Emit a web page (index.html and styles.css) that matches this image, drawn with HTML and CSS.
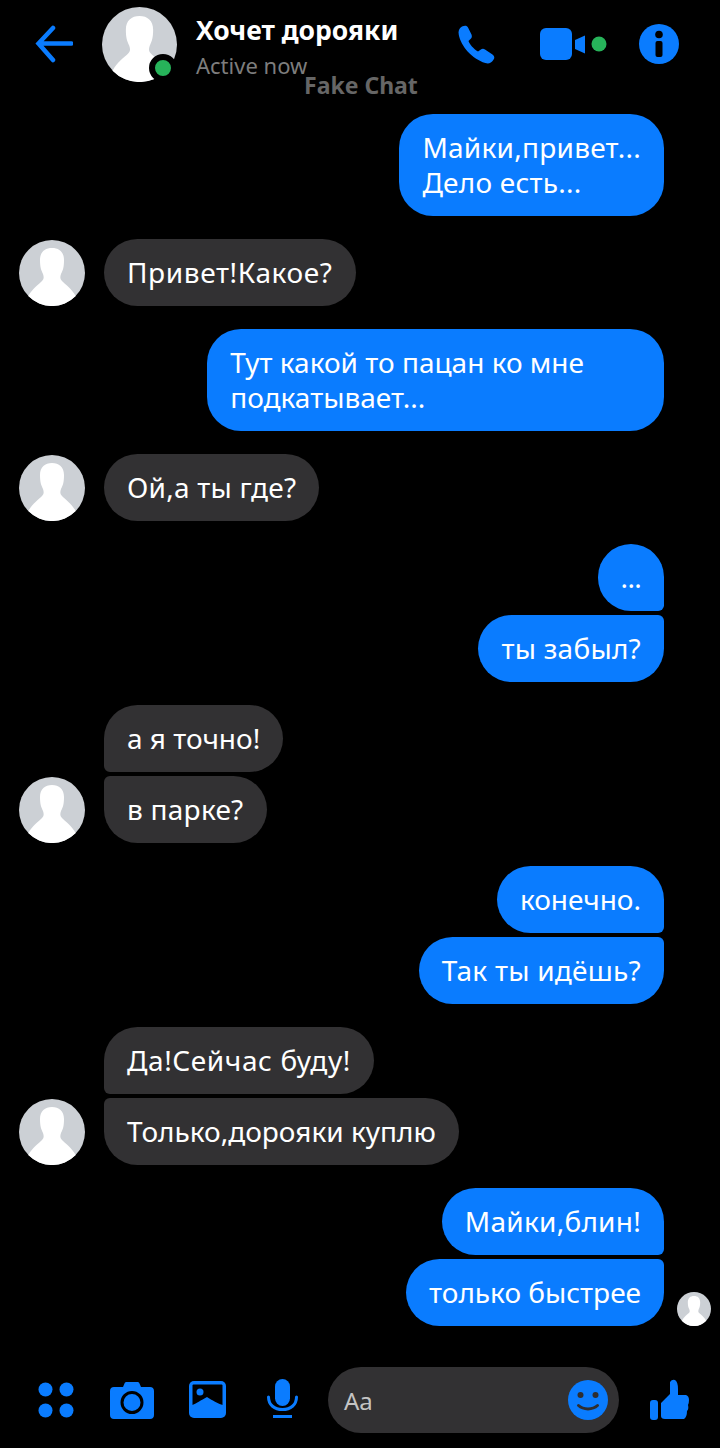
FILE: index.html
```html
<!DOCTYPE html>
<html lang="ru">
<head>
    <meta charset="UTF-8">
    <meta name="viewport" content="width=device-width, initial-scale=1.0">
    <title>Fake Chat</title>
    <link rel="stylesheet" href="styles.css">
</head>
<body>

<svg class="defs" width="0" height="0">
    <symbol id="face" viewBox="0 0 66 66">
        <circle cx="33" cy="33" r="33" fill="#ccd0d5"/>
        <path d="M21 20C21 12 26 8 33 8S45 12 45 20C45 27 44 30 42 34C41 37 41 39 43 41C46 44 53 49 56.700 56A33 33 0 0 1 9.300 56C13 49 20 44 23 41C25 39 25 37 24 34C22 30 21 27 21 20Z" fill="#fff"/>
    </symbol>
</svg>

<header class="top">
    <svg class="back" width="40" height="38" viewBox="0 0 40 38">
        <path d="M38.500 18.500H6M20 3 5.500 18.500 20 35" fill="none" stroke="#0a7cff" stroke-width="4.500" stroke-linecap="round" stroke-linejoin="miter"/>
    </svg>
    <div class="top-avatar">
        <svg class="avatar-big"><use href="#face"/></svg>
        <span class="online"></span>
    </div>
    <div class="title">
        <div class="name">Хочет дорояки</div>
        <div class="status">Active now</div>
    </div>
    <svg class="phone" width="40" height="40" viewBox="0 0 40 40">
        <path d="M4 1.500c3-1.500 5-1 6 1l3.500 7c.8 2 .2 3.500-1 4.500l-2 2c1 3 5 8 9.500 10.500l2.500-1.800c1.500-1 3-1.200 4.500-.2l7.500 5c2 1.500 2.500 3.500.8 5.500-2 3-4.500 4-8 3C14 34 3 21 .8 10 0 6 1 3.500 4 1.500z" fill="#0a7cff"/>
    </svg>
    <svg class="video" width="69" height="32" viewBox="0 0 69 32">
        <rect x="0" y="0" width="32" height="32" rx="6" fill="#0a7cff"/>
        <path d="M35 12 45 7.500v18L35 21z" fill="#0a7cff"/>
        <circle cx="59" cy="16" r="7.500" fill="#27b35a"/>
    </svg>
    <svg class="info" width="40" height="40" viewBox="0 0 40 40">
        <circle cx="20" cy="20" r="20" fill="#0a7cff"/>
        <circle cx="20" cy="10.500" r="3.800" fill="#000"/>
        <rect x="16.500" y="17" width="7" height="16" rx="2" fill="#000"/>
    </svg>
</header>
<div class="watermark">Fake Chat</div>

<main class="chat">
    <div class="group sent">
        <div class="bubble slight">Майки,привет...<br>Дело есть...</div>
    </div>
    <div class="group recv">
        <svg class="avatar"><use href="#face"/></svg>
        <div class="stack">
            <div class="bubble loose">Привет!Какое?</div>
        </div>
    </div>
    <div class="group sent">
        <div class="bubble wide">Тут какой то пацан ко мне<br>подкатывает...</div>
    </div>
    <div class="group recv">
        <svg class="avatar"><use href="#face"/></svg>
        <div class="stack">
            <div class="bubble slight">Ой,а ты где?</div>
        </div>
    </div>
    <div class="group sent">
        <div class="bubble first dots">...</div>
        <div class="bubble last slight">ты забыл?</div>
    </div>
    <div class="group recv">
        <svg class="avatar"><use href="#face"/></svg>
        <div class="stack">
            <div class="bubble first">а я точно!</div>
            <div class="bubble last slight">в парке?</div>
        </div>
    </div>
    <div class="group sent">
        <div class="bubble first">конечно.</div>
        <div class="bubble last slight">Так ты идёшь?</div>
    </div>
    <div class="group recv">
        <svg class="avatar"><use href="#face"/></svg>
        <div class="stack">
            <div class="bubble first loose">Да!Сейчас буду!</div>
            <div class="bubble last">Только,дорояки куплю</div>
        </div>
    </div>
    <div class="group sent">
        <div class="bubble first slight">Майки,блин!</div>
        <div class="seen-row">
            <div class="bubble last">только быстрее</div>
            <svg class="seen"><use href="#face"/></svg>
        </div>
    </div>
</main>

<footer class="bottom">
    <svg class="apps" width="37" height="37" viewBox="0 0 37 37">
        <circle cx="7.500" cy="7.500" r="7" fill="#0a7cff"/>
        <circle cx="28.500" cy="7.500" r="7" fill="#0a7cff"/>
        <circle cx="7.500" cy="28.500" r="7" fill="#0a7cff"/>
        <circle cx="28.500" cy="28.500" r="7" fill="#0a7cff"/>
    </svg>
    <svg class="camera" width="44" height="37" viewBox="0 0 44 37">
        <path d="M13 5l1.500-3.500c.4-1 1-1.500 2-1.500h11c1 0 1.600.5 2 1.500L31 5h9c2.500 0 4 1.500 4 4v24c0 2.500-1.500 4-4 4H4c-2.500 0-4-1.500-4-4V9c0-2.500 1.500-4 4-4z" fill="#0a7cff"/>
        <circle cx="22" cy="20.500" r="10" fill="#0a7cff" stroke="#000" stroke-width="3"/>
    </svg>
    <svg class="image" width="37" height="37" viewBox="0 0 37 37">
        <rect width="37" height="37" rx="5" fill="#0a7cff"/>
        <rect x="3.500" y="3.500" width="30" height="30" rx="1" fill="#000"/>
        <circle cx="11" cy="11" r="3.500" fill="#0a7cff"/>
        <path d="M3 24c4-1 9-5 15-8 5 3 11 7 16 8v10H3z" fill="#0a7cff"/>
    </svg>
    <svg class="mic" width="31" height="39" viewBox="0 0 31 39">
        <rect x="8" y="0" width="15" height="27" rx="7.500" fill="#0a7cff"/>
        <path d="M1.500 18c0 8 6 12.500 14 12.500S29.500 26 29.500 18" fill="none" stroke="#0a7cff" stroke-width="3" stroke-linecap="round"/>
        <rect x="6" y="36" width="19" height="3" fill="#0a7cff"/>
    </svg>
    <div class="input">
        <span class="placeholder">Aa</span>
        <svg class="smile" width="40" height="40" viewBox="0 0 40 40">
            <circle cx="20" cy="20" r="20" fill="#0a7cff"/>
            <circle cx="12.500" cy="15" r="3" fill="#2f2e30"/>
            <circle cx="27.500" cy="15" r="3" fill="#2f2e30"/>
            <path d="M10.500 25.500c5 4.500 14 4.500 19 0" fill="none" stroke="#2f2e30" stroke-width="3" stroke-linecap="round"/>
        </svg>
    </div>
    <svg class="thumb" width="41" height="41" viewBox="0 0 41 41">
        <rect x="1" y="21" width="8" height="20" rx="3" fill="#0a7cff"/>
        <path d="M12 24L21 15V3Q23 0 26 1Q29 3 29 10V16H37Q40 17 40 21Q40 24 39 26Q40 30 38 32Q38 38 35 40H16Q12 40 12 37Z" fill="#0a7cff"/>
    </svg>
</footer>

</body>
</html>
```

FILE: styles.css
```css
:root {
    --blue: #0a7cff;
    --grey: #323133;
}

* { box-sizing: border-box; }

body {
    margin: 0;
    height: 1448px;
    overflow: hidden;
    position: relative;
    background: #000;
    color: #fff;
    font-family: 'Noto Sans', 'Open Sans', sans-serif;
    display: flex;
    flex-direction: column;
}

.defs { position: absolute; }

/* Header */
.top {
    height: 114px;
    padding: 7px 0 0 33px;
    display: flex;
    align-items: flex-start;
    flex-shrink: 0;
}

.back { margin-top: 18px; }

.top-avatar {
    position: relative;
    width: 75px;
    height: 75px;
    margin-left: 29px;
}

.avatar-big { width: 75px; height: 75px; display: block; }

.online {
    position: absolute;
    left: 47px;
    top: 47px;
    width: 28px;
    height: 28px;
    border-radius: 50%;
    background: #27b35a;
    border: 6px solid #000;
}

.title { margin-left: 19px; width: 262px; }

.name { font-size: 26.5px; font-weight: 700; line-height: 34px; margin-top: 6px; }

.status { font-size: 22px; line-height: 30px; margin-top: 3px; color: #7d7d7d; }

.phone { margin-top: 18px; }
.video { margin-top: 21px; margin-left: 42px; }
.info { margin-top: 17px; margin-left: 30px; }

.watermark {
    position: absolute;
    left: 304px;
    top: 68px;
    font-size: 23px;
    line-height: 34px;
    font-weight: 700;
    color: #666;
}

/* Messages */
.chat {
    flex: 1;
    display: flex;
    flex-direction: column;
    gap: 23px;
    padding: 0 56px 0 19px;
}

.group { display: flex; }

.group.sent { flex-direction: column; align-items: flex-end; gap: 4px; }
.group.recv { align-items: flex-end; gap: 19px; }

.stack { display: flex; flex-direction: column; align-items: flex-start; gap: 4px; }

.avatar { width: 66px; height: 66px; display: block; flex-shrink: 0; }

.bubble {
    padding: 16px 23px;
    font-size: 28px;
    line-height: 35px;
    border-radius: 34px;
}

.bubble.wide { padding-right: 80px; }
.bubble.dots { letter-spacing: -0.7px; }

/* some messages run a little wider in the original font */
.bubble.loose { letter-spacing: 0.6px; }
.bubble.slight { letter-spacing: 0.25px; }

.sent .bubble { background: var(--blue); }
.recv .bubble { background: var(--grey); }

.sent .first { border-bottom-right-radius: 6px; }
.sent .last { border-top-right-radius: 6px; }
.recv .first { border-bottom-left-radius: 6px; }
.recv .last { border-top-left-radius: 6px; }

.seen-row { display: flex; align-items: flex-end; margin-right: -47px; gap: 13px; }
.seen { width: 34px; height: 34px; display: block; }

/* Bottom bar */
.bottom {
    height: 83px;
    flex-shrink: 0;
    display: flex;
    align-items: flex-start;
    padding-left: 38px;
}

.apps { margin-top: 17px; }
.camera { margin-top: 17px; margin-left: 35px; }
.image { margin-top: 16px; margin-left: 35px; }
.mic { margin-top: 14px; margin-left: 41px; }

.input {
    width: 291px;
    height: 66px;
    margin-top: 2px;
    margin-left: 30px;
    padding: 0 11px 0 16px;
    background: var(--grey);
    border-radius: 33px;
    display: flex;
    align-items: center;
    justify-content: space-between;
}

.placeholder { font-size: 24px; color: #c4c4c4; }

.thumb { margin-top: 14px; margin-left: 30px; }
```
